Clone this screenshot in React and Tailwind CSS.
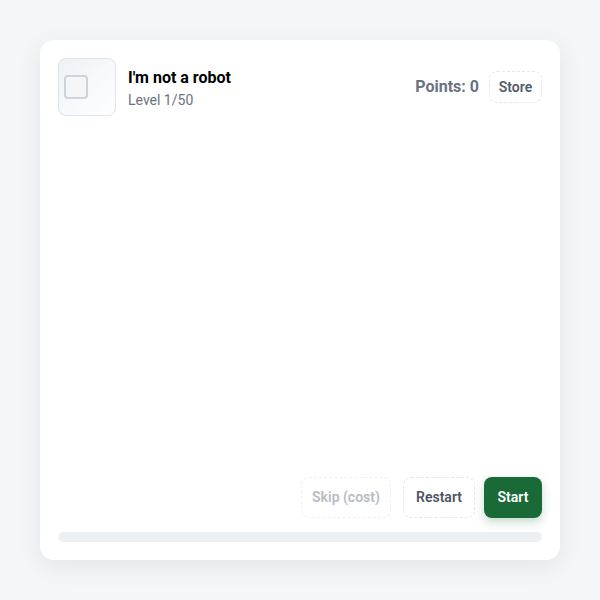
export default function App() {
  return (
    <div className="min-h-screen w-[600px] h-[600px] bg-[#f5f6f8] p-[40px] font-['Roboto',sans-serif]">
      <div className="w-[520px] h-[520px] bg-white rounded-[14px] shadow-[0_6px_24px_rgba(15,23,42,0.08)] p-[18px] flex flex-col">
        {/* header */}
        <div className="flex items-center">
          <div className="w-[58px] h-[58px] rounded-[8px] border border-[#dde4eb] bg-gradient-to-br from-[#eef2f6] to-white flex items-center pl-[5px]">
            <div className="w-[24px] h-[24px] rounded-[4px] border-2 border-[#cdd4dc] bg-[#f4f6f8]" />
          </div>
          <div className="ml-[12px] flex flex-col">
            <span className="text-[16px] leading-[22px] font-bold text-black mt-[2px]">I'm not a robot</span>
            <span className="text-[14px] leading-[20px] text-[#6b7280] mt-[1px]">Level 1/50</span>
          </div>
          <div className="ml-auto flex items-center gap-[10px]">
            <span className="text-[16px] font-bold text-[#6b7280]">Points: 0</span>
            <button className="h-[32px] w-[53px] rounded-[8px] border border-dashed border-[#e5e7eb] text-[14px] font-semibold text-[#555c68]">
              Store
            </button>
          </div>
        </div>

        <div className="flex-1" />

        {/* actions */}
        <div className="flex justify-end items-center">
          <button className="h-[41px] w-[90px] rounded-[8px] border border-dashed border-[#eef0f2] text-[14px] font-semibold text-[#b8bcc3]">
            Skip (cost)
          </button>
          <button className="h-[41px] w-[72px] ml-[12px] rounded-[8px] border border-dashed border-[#e5e7eb] text-[14px] font-semibold text-[#4b5563]">
            Restart
          </button>
          <button className="h-[41px] w-[58px] ml-[9px] rounded-[8px] bg-[#1a6a37] text-[14px] font-semibold text-white shadow-[0_4px_10px_rgba(26,106,55,0.25)]">
            Start
          </button>
        </div>

        <div className="mt-[14px] h-[10px] rounded-full bg-[#edf0f3]" />
      </div>
    </div>
  );
}
